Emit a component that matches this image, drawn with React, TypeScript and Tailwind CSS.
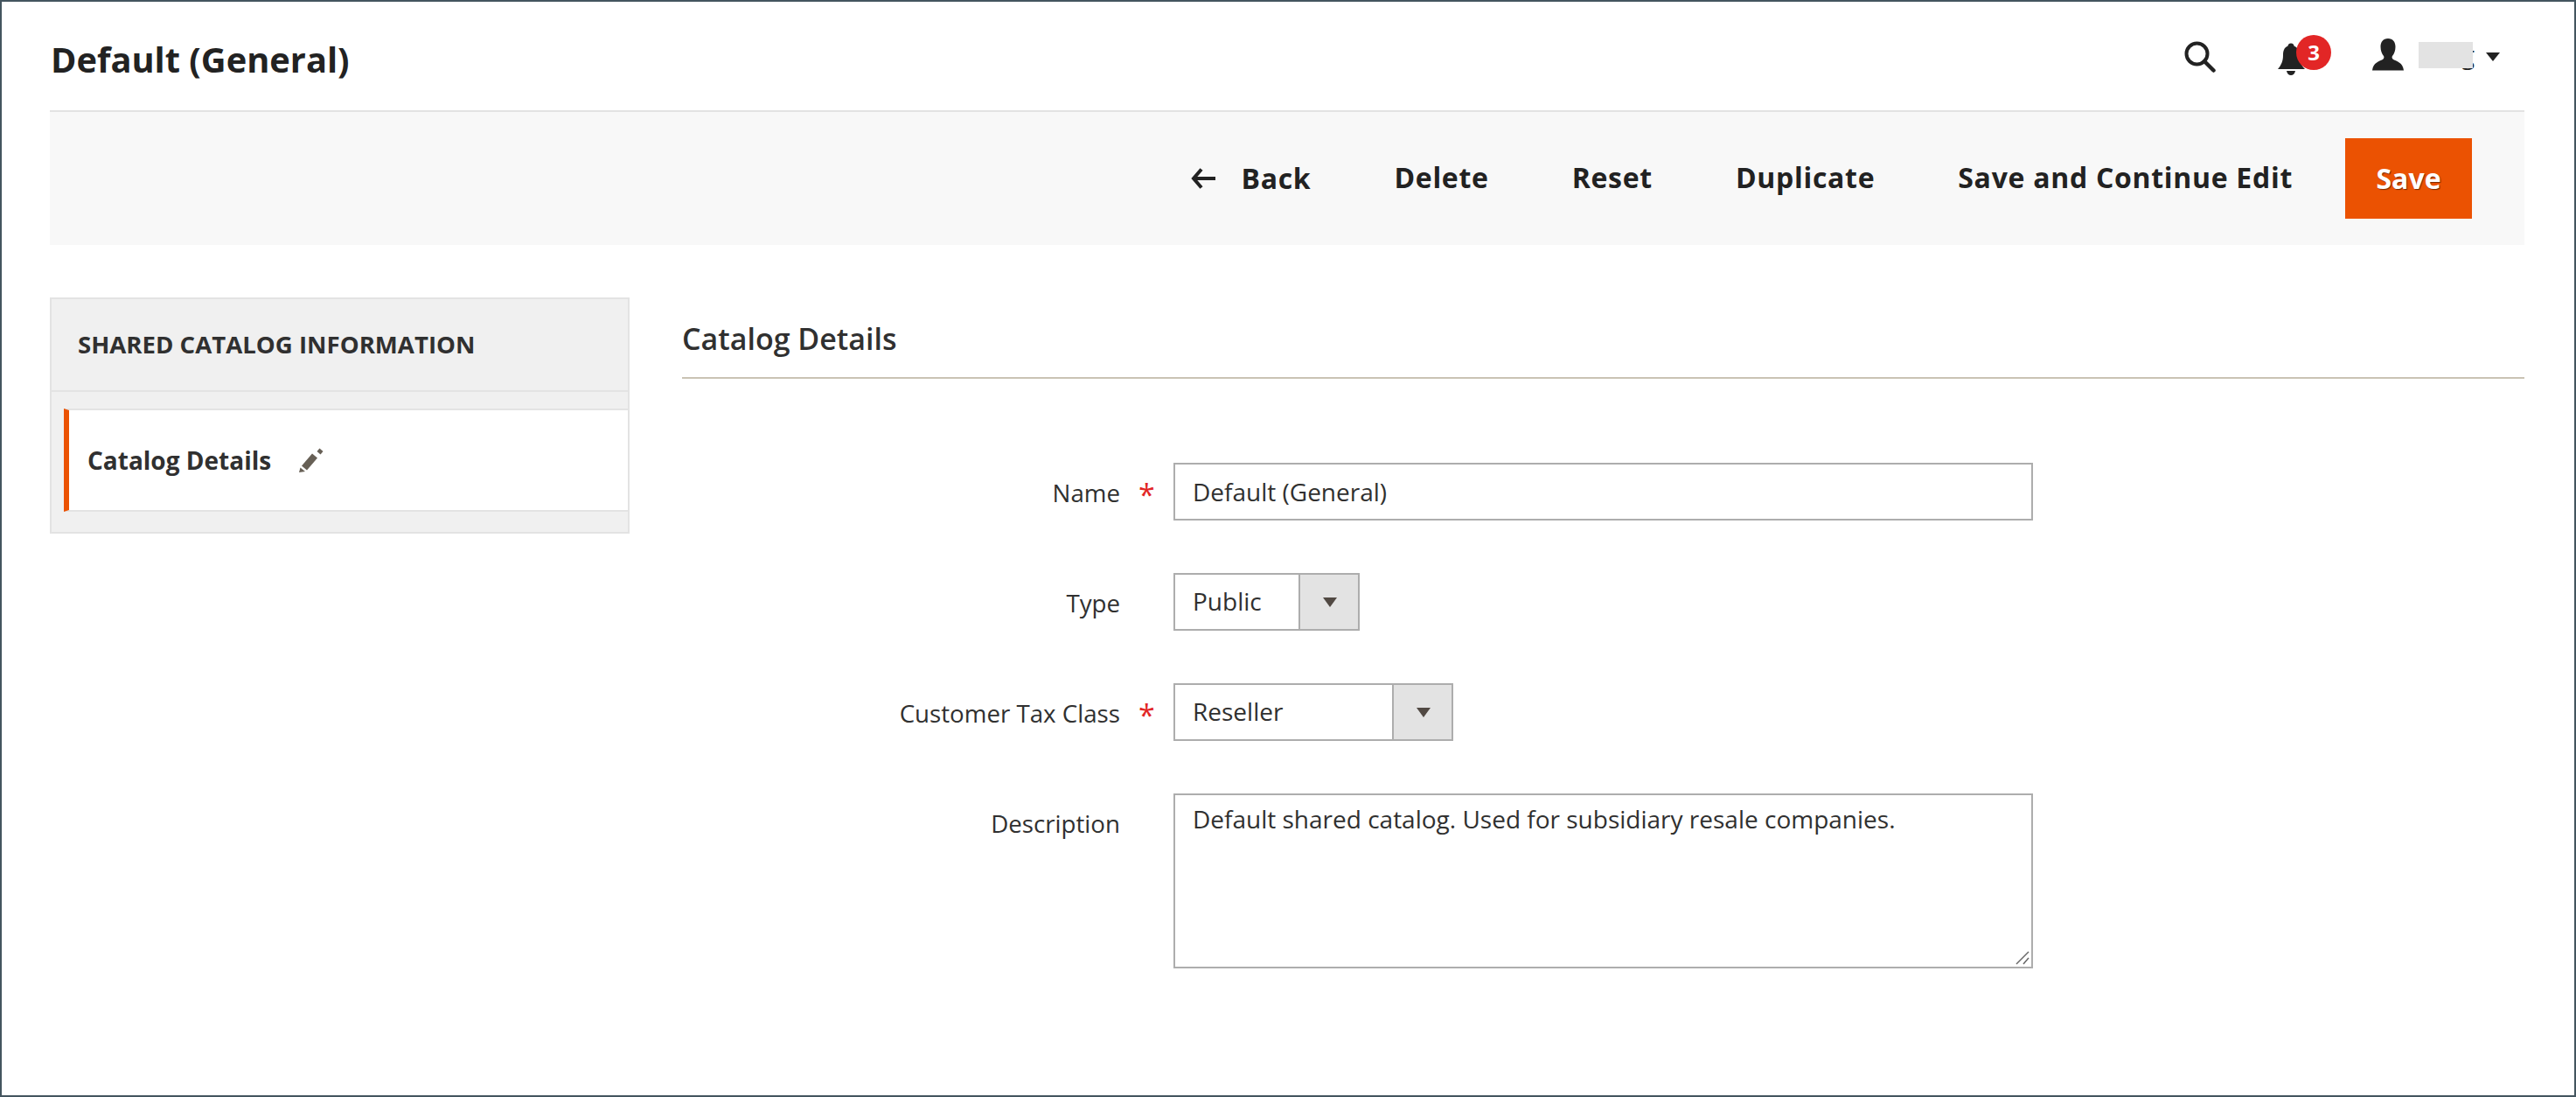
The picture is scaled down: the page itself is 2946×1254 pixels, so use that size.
import type { ReactNode } from 'react';

function SearchIcon() {
  return (
    <svg width="36" height="36" viewBox="0 0 36 36" fill="none" stroke="#222" strokeWidth="4">
      <circle cx="14.5" cy="14.5" r="12" />
      <path d="M23 23 L33.500 33.500" strokeLinecap="round" strokeWidth="4.500" />
    </svg>
  );
}

function BellIcon() {
  return (
    <svg width="32" height="38" viewBox="0 0 32 38" fill="#222">
      <circle cx="15" cy="4" r="3.500" />
      <path d="M15 3c7 0 9.500 5 9.500 11 0 7 2 11 6.500 16H0c4-5 6-9 6-16C6 8 8 3 15 3z" />
      <path d="M10 32h10c-.5 3-2.500 5-5 5s-4.500-2-5-5z" />
    </svg>
  );
}

function UserIcon() {
  return (
    <svg width="36" height="37" viewBox="0 0 36 37" fill="#222">
      <path d="M18 0c5.500 0 8.500 4 8.500 9.500 0 4.500-1.500 8-3.500 10.500-.8 1-.5 3 1 4 4 2 11 3.500 12 12.500H0c1-9 8-10.500 12-12.500 1.500-1 1.800-3 1-4-2-2.500-3.500-6-3.500-10.500C9.500 4 12.500 0 18 0z" />
    </svg>
  );
}

function BackArrow() {
  return (
    <svg width="28" height="24" viewBox="0 0 28 24" fill="none" stroke="#222" strokeWidth="4">
      <path d="M28 12H4" />
      <path d="M12 1.500 L3 12 L12 22.500" />
    </svg>
  );
}

function PencilIcon() {
  return (
    <svg width="28" height="28" viewBox="0 0 28 28" fill="#676056">
      <path d="M23.500 0.500 L27.500 4 L24.500 7.500 L20.500 4 Z" />
      <path d="M15 6.500 L21 11.500 L9 25.500 L3 20.500 Z" />
      <path d="M1.500 22.500 L7 27 L0 28 Z" />
    </svg>
  );
}

function Caret({ color, w, h }: { color: string; w: number; h: number }) {
  return (
    <svg width={w} height={h} viewBox="0 0 16 11" fill={color} preserveAspectRatio="none">
      <path d="M0 0h16L8 11z" />
    </svg>
  );
}

function ActionButton({ label }: { label: string }) {
  return <button className="text-[32px] font-bold tracking-[0.7px] text-[#222] leading-none">{label}</button>;
}

function FieldRow({ label, required, children }: { label: string; required?: boolean; children: ReactNode }) {
  return (
    <div className="flex items-start">
      <div className="h-[66px] w-[501px] pt-[1px] text-right text-[27.700px] leading-[66px] text-[#303030]">{label}</div>
      <div className="h-[66px] w-[61px] pl-[21px] pt-[3px] text-[34px] leading-[66px] text-[#e22626]">
        {required && '*'}
      </div>
      {children}
    </div>
  );
}

function SelectBox({ value, width }: { value: string; width: string }) {
  return (
    <div className={`flex h-[66px] border-2 border-[#adadad] bg-white ${width}`}>
      <div className="flex-1 pl-[20px] text-[28px] leading-[60px] text-[#303030]">{value}</div>
      <div className="flex w-[68px] items-center justify-center border-l-2 border-[#adadad] bg-[#e3e3e3] pl-[2px]">
        <Caret color="#514943" w={16} h={11} />
      </div>
    </div>
  );
}

export default function App() {
  return (
    <div
      className="h-[1254px] w-[2946px] border-2 border-[#44555f] bg-white"
      style={{ fontFamily: '"Open Sans", sans-serif' }}
    >
      {/* Header */}
      <header className="flex h-[124px] items-start justify-between pl-[56px]">
        <h1 className="pt-[38px] text-[39.800px] font-bold leading-[56px] text-[#222]">Default (General)</h1>
        <div className="flex items-start pt-[38px]">
          <div className="mt-[7px]">
            <SearchIcon />
          </div>
          <div className="relative ml-[71px] mt-[9px]">
            <BellIcon />
            <span className="absolute left-[21px] top-[-9px] flex h-[40px] w-[40px] items-center justify-center rounded-full bg-[#e22626] text-[24px] font-bold text-white">
              3
            </span>
          </div>
          <div className="ml-[76px] mt-[4px]">
            <UserIcon />
          </div>
          <div className="relative ml-[17px] mt-[8px] h-[30px] w-[64px]">
            <span className="absolute right-0 top-[-6px] text-[28px] leading-[40px] text-[#222]">g</span>
            <div className="absolute left-0 top-0 h-[30px] w-[62px] bg-[#e3e3e3]" />
          </div>
          <div className="ml-[13px] mr-[85px] mt-[20px]">
            <Caret color="#222" w={16} h={10} />
          </div>
        </div>
      </header>

      {/* Toolbar */}
      <div className="ml-[55px] mr-[57px] flex h-[154px] items-center justify-end border-t-2 border-[#e3e3e3] bg-[#f8f8f8] pr-[60px]">
        <div className="mr-[29px]">
          <BackArrow />
        </div>
        <ActionButton label="Back" />
        <div className="ml-[95px]">
          <ActionButton label="Delete" />
        </div>
        <div className="ml-[95px]">
          <ActionButton label="Reset" />
        </div>
        <div className="ml-[95px]">
          <ActionButton label="Duplicate" />
        </div>
        <div className="ml-[95px]">
          <ActionButton label="Save and Continue Edit" />
        </div>
        <button className="ml-[60px] h-[92px] w-[145px] bg-[#eb5202] text-[32px] font-bold text-white [text-shadow:1px_1px_1px_rgba(0,0,0,0.5)]">
          Save
        </button>
      </div>

      {/* Body */}
      <div className="ml-[55px] mr-[57px] mt-[60px] flex items-start">
        <aside className="h-[270px] w-[663px] shrink-0 border-2 border-[#e3e3e3] bg-[#f0f0f0]">
          <div className="flex h-[106px] items-center border-b-2 border-[#e3e3e3] pl-[30px] text-[27.600px] font-bold text-[#303030]">
            SHARED CATALOG INFORMATION
          </div>
          <div className="ml-[14px] mt-[19px] flex h-[118px] items-center border-y-2 border-l-[6px] border-[#e3e3e3] border-l-[#eb5202] bg-white pl-[21px] text-[28px] font-bold text-[#303030]">
            Catalog Details
            <span className="ml-[32px]">
              <PencilIcon />
            </span>
          </div>
        </aside>

        <main className="ml-[60px] flex-1">
          <h2 className="h-[93px] border-b-2 border-[#cac3b4] pt-[24px] text-[34px] font-semibold leading-[46px] text-[#303030]">
            Catalog Details
          </h2>
          <div className="mt-[96px] flex flex-col gap-[60px]">
            <FieldRow label="Name" required>
              <input
                readOnly
                value="Default (General)"
                className="h-[66px] w-[983px] border-2 border-[#adadad] bg-white pl-[20px] text-[28px] text-[#303030]"
              />
            </FieldRow>
            <FieldRow label="Type">
              <SelectBox value="Public" width="w-[213px]" />
            </FieldRow>
            <FieldRow label="Customer Tax Class" required>
              <SelectBox value="Reseller" width="w-[320px]" />
            </FieldRow>
            <FieldRow label="Description">
              <div className="relative h-[200px] w-[983px]">
                <textarea
                  readOnly
                  value="Default shared catalog. Used for subsidiary resale companies."
                  className="h-full w-full resize-none border-2 border-[#adadad] bg-white px-[20px] py-[10px] text-[28px] leading-[34px] text-[#303030]"
                />
                <svg className="absolute bottom-[4px] right-[4px]" width="16" height="16" viewBox="0 0 16 16" stroke="#666" strokeWidth="1.500">
                  <path d="M1 15 L15 1" />
                  <path d="M9 15 L15 8" />
                </svg>
              </div>
            </FieldRow>
          </div>
        </main>
      </div>
    </div>
  );
}
